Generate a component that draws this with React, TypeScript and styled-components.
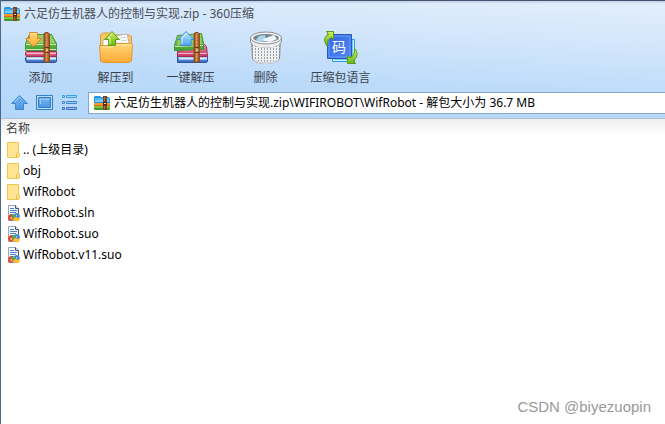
import React from "react";
import styled, { createGlobalStyle } from "styled-components";

const GlobalStyle = createGlobalStyle`
  *, *::before, *::after { box-sizing: border-box; }
  body {
    margin: 0;
    background: #fff;
    font-family: "Noto Sans", "Noto Sans CJK SC", sans-serif;
    font-size: 12px;
    line-height: 20px;
    color: #000;
  }
  svg { display: block; flex: none; }
`;

const Window = styled.main`
  position: relative;
  display: flex;
  flex-direction: column;
  min-height: 100vh;
  border-left: 1px solid #49698f;
  overflow: hidden;
`;

const Header = styled.header`
  border-top: 1px solid #42536f;
  border-bottom: 1px solid #b4bfcc;
  background:
    linear-gradient(#8fa0b866, #ffffff00 3px),
    linear-gradient(183deg, #e3effd 0%, #d3e6fb 30%, #bcdbfa 65%, #b3d6fa 100%);
`;

const TitleBar = styled.div`
  display: flex;
  align-items: center;
  gap: 4px;
  height: 26px;
  padding-left: 3px;
`;

const Title = styled.h1`
  margin: 0;
  font-size: 12px;
  font-weight: 400;
  color: #474c54;
  white-space: nowrap;
`;

const Toolbar = styled.nav`
  display: flex;
  padding: 3px 0 0 2px;
`;

const ToolButton = styled.button`
  display: flex;
  flex: none;
  flex-direction: column;
  align-items: center;
  gap: 2px;
  width: 75px;
  padding: 0;
  border: 0;
  background: none;
  font: inherit;
  color: #3c424c;
  white-space: nowrap;
`;

const AddressBar = styled.div`
  display: flex;
  align-items: center;
  padding: 4px 0 4px 10px;
`;

const NavButton = styled.button`
  width: 25px;
  padding: 0;
  border: 0;
  background: none;
`;

const AddressField = styled.label`
  display: flex;
  flex: 1;
  align-items: center;
  gap: 4px;
  height: 22px;
  margin-left: 2px;
  padding-left: 5px;
  border: 1px solid #86a6ca;
  border-right: 0;
  background: #fff;
`;

const AddressInput = styled.input`
  flex: 1;
  min-width: 0;
  padding: 0;
  border: 0;
  outline: 0;
  background: none;
  font: inherit;
  color: #000;
`;

const Content = styled.section`
  flex: 1;
  background: linear-gradient(#efefef, #fff 18px);
`;

const FileTable = styled.table`
  width: 100%;
  border-collapse: collapse;
`;

const ColumnHead = styled.th`
  height: 20px;
  padding: 0 5px;
  font-weight: 400;
  text-align: left;
  color: #3c3c3c;
`;

const FileCell = styled.td`
  height: 21px;
  padding: 0 5px;
`;

const FileEntry = styled.div`
  display: flex;
  align-items: center;
  gap: 2px;
`;

const Watermark = styled.div`
  position: absolute;
  right: 14px;
  bottom: 7px;
  font-family: "Liberation Sans", sans-serif;
  font-size: 15px;
  color: #999;
`;

const ArchiveIcon = () => (
  <svg width="16" height="16" viewBox="0 0 16 16" aria-hidden="true">
    <path d="M1 1h5l1 1h8l1 2v4H0V2z" fill="#2596e2" />
    <path d="M1 3h14v4H1z" fill="#54b9f0" />
    <path d="M1 5h14v2H1z" fill="#7bd0f8" />
    <path d="M0 8h16v3H0z" fill="#f99a2b" />
    <path d="M0 10h16v1H0z" fill="#e06c18" />
    <path d="M0 11h16v3l-1 1H1l-1-1z" fill="#7cc53e" />
    <path d="M0 13h16v1l-1 1H1l-1-1z" fill="#44982a" />
    <path d="M9 1h4v14H9z" fill="#7c4022" />
    <path d="M10 2h1v4h-1zM10 11h1v3h-1z" fill="#b46b3d" />
    <path d="M9 7h4v3H9z" fill="#4b2112" />
    <path d="M10 8h2v1h-2z" fill="#f5dfc8" />
  </svg>
);

const Gradients = () => (
  <svg width="0" height="0" aria-hidden="true">
    <defs>
      <linearGradient id="green" x2="0" y2="1"><stop stopColor="#9dd665" /><stop offset="1" stopColor="#3f9f32" /></linearGradient>
      <linearGradient id="red" x2="0" y2="1"><stop stopColor="#f08aa4" /><stop offset="1" stopColor="#c43562" /></linearGradient>
      <linearGradient id="blue" x2="0" y2="1"><stop stopColor="#8bb8f0" /><stop offset="1" stopColor="#2d5dbc" /></linearGradient>
      <linearGradient id="orange" x2="0" y2="1"><stop stopColor="#ffd876" /><stop offset="1" stopColor="#fca936" /></linearGradient>
      <linearGradient id="strap"><stop stopColor="#8b4a1c" /><stop offset=".5" stopColor="#d08446" /><stop offset="1" stopColor="#8b4a1c" /></linearGradient>
      <linearGradient id="sky" x2="0" y2="1"><stop stopColor="#c5ebff" /><stop offset="1" stopColor="#4ba4ef" /></linearGradient>
      <linearGradient id="lime" x2="0" y2="1"><stop stopColor="#d3f35a" /><stop offset="1" stopColor="#68b516" /></linearGradient>
      <linearGradient id="code" x2="1" y2="1"><stop stopColor="#3267df" /><stop offset="1" stopColor="#5288fa" /></linearGradient>
      <linearGradient id="nav" x2="0" y2="1"><stop stopColor="#78b8f5" /><stop offset="1" stopColor="#4a94e4" /></linearGradient>
      <pattern id="mesh" width="3" height="3" patternUnits="userSpaceOnUse">
        <rect width="3" height="3" fill="#f0f1f2" /><rect width="1" height="2" x="1" fill="#999da1" />
      </pattern>
    </defs>
  </svg>
);

const Strap = () => (
  <>
    <path d="M21 3.500 22.500 2.500h2.500l1.500 1.500v28H21z" fill="url(#strap)" stroke="#8b4d22" />
    <path d="M23.500 5v26" stroke="#e4a267" strokeDasharray="2 1" />
    <path d="M22 17.500h4M22 22.500h4" stroke="#6d3814" />
    <path d="M23 19h2v2h-2z" fill="#e9bf85" />
  </>
);

const AddIcon = () => (
  <svg width="36" height="36" viewBox="0 0 36 36" aria-hidden="true">
    <path d="M3.500 26.500h30v5l-1 1h-29l-1-2v-3z" fill="url(#blue)" stroke="#31579f" />
    <path d="M4 28.500h29" stroke="#e2efff" strokeWidth="2" />
    <path d="M3.500 21.500h30v5h-30l-1-2v-2z" fill="url(#red)" stroke="#a12b54" />
    <path d="M4 23.500h29" stroke="#f7bccb" />
    <path d="M6.500 4.500h22l5 9v7h-31v-7z" fill="url(#green)" stroke="#45943a" />
    <path d="M8 6h20l4 7H4z" fill="#94cf63" />
    <path d="M3 14.500h30M3 19.500h30" stroke="#c9e8aa" />
    <Strap />
    <path d="M6.500 2.500h8v6h4l-8 8-8-8h4z" fill="url(#orange)" stroke="#d98a2b" />
    <path d="M7.500 3.500h6" stroke="#fff0b1" />
  </svg>
);

const ExtractIcon = () => (
  <svg width="36" height="36" viewBox="0 0 36 36" aria-hidden="true">
    <path d="M2.500 31V5l2-2h7l2 2h18l2 2v24z" fill="#f9c95f" stroke="#cf9c42" />
    <path d="m5 10 6-4 6 11H5z" fill="#fafafa" stroke="#b9b9b9" />
    <path d="m17 6 12-2 3 13H19z" fill="#fff" stroke="#b3b3b3" />
    <path d="m22 8 6-1m-5 4 6-1" stroke="#c8cbcf" />
    <path d="M1.500 15.500h12l3-2h17l1 1-1 16-2 2h-27l-2-2z" fill="url(#orange)" stroke="#e2962d" />
    <path d="M3 17h11l3-2h16" fill="none" stroke="#ffe8a0" />
    <path d="m14 1.500 7.500 8h-4v6h-7v-6h-4z" fill="url(#lime)" stroke="#5ba021" />
    <path d="m14 4-4 4h2v6" fill="none" stroke="#ebfaa0" />
  </svg>
);

const QuickExtractIcon = () => (
  <svg width="36" height="36" viewBox="0 0 36 36" aria-hidden="true">
    <path d="M4.500 26.500h30v5l-1 1h-29z" fill="url(#blue)" stroke="#31579f" />
    <path d="M6 28.500h28" stroke="#dceaff" strokeWidth="2" />
    <path d="m4.500 21.500 27-7 2 2 1 10h-30z" fill="url(#red)" stroke="#a12b54" />
    <path d="M5 23.500h29" stroke="#f5b6c5" />
    <path d="m4.500 5.500 24-2 2 10v6l-29 1v-5z" fill="url(#green)" stroke="#45943a" />
    <path d="m6 7 21-2 2 9-25 1z" fill="#94cf63" />
    <path d="m2 16.500 28-1" stroke="#c9e8aa" />
    <Strap />
    <path d="m13 1.500 8 8h-3v6H8v-6H5z" fill="url(#sky)" stroke="#3b8dd4" />
    <path d="m13 4-4 4v6" fill="none" stroke="#eafaff" />
  </svg>
);

const DeleteIcon = () => (
  <svg width="36" height="36" viewBox="0 0 36 36" aria-hidden="true">
    <path d="m3.500 8 1 21c3 6 23 6 27 0l1-21z" fill="url(#mesh)" stroke="#85898d" />
    <path d="M5 28c4 5 22 5 26 0l-1 3c-6 4-18 4-24 0z" fill="#d9dadc" />
    <path d="M2.500 8v4c3 7 28 7 31 0V8z" fill="#eee" stroke="#8b9094" />
    <ellipse cx="18" cy="8" rx="15.500" ry="6" fill="#f5f5f5" stroke="#8b9094" />
    <ellipse cx="18" cy="8" rx="13" ry="4" fill="#78838c" />
    <path d="m8 10 3-4 6-1 1 6-6 1z" fill="#a8d9f1" />
    <path d="m15 9 11-4 3 4-7 3-6-1z" fill="#edf8fe" />
    <path d="M5 14c5 4 21 4 26 0" fill="none" stroke="#fff" />
  </svg>
);

const CodeGlyph = styled.text`
  font-family: "Noto Sans CJK SC", sans-serif;
  font-size: 14px;
  fill: #fff;
`;

const LanguageIcon = () => (
  <svg width="36" height="36" viewBox="0 0 36 36" aria-hidden="true">
    <path d="M9.500 9.500h22v22h-22z" fill="#d3efff" stroke="#2f99df" />
    <path d="M11 29h18V10" fill="none" stroke="#61c9f4" strokeWidth="2" />
    <path d="M4.500 4.500h24v24h-24z" fill="url(#code)" stroke="#2857bd" />
    <path d="M6 6h21v21H6z" fill="none" stroke="#6b99f6" />
    <CodeGlyph x="9" y="22">码</CodeGlyph>
    <path d="M3.500 15.500C0 10 2 6 5.500 4.500l-2-3h7v8l-2-2C5 9 4 12 4.500 15.500z" fill="url(#lime)" stroke="#579818" />
    <path d="M32.500 19.500c3 5 1 9-2 11l2 3h-8v-8l3 2c3-1 4-4 4-8z" fill="url(#lime)" stroke="#579818" />
  </svg>
);

const UpIcon = () => (
  <svg width="18" height="18" viewBox="0 0 18 18" aria-hidden="true">
    <path d="m8.500 1.500 8 8h-4v6h-8v-6h-4z" fill="url(#nav)" stroke="#3f88d0" />
    <path d="m8.500 3-5 5" stroke="#a7d5fb" />
  </svg>
);

const PreviewIcon = () => (
  <svg width="18" height="18" viewBox="0 0 18 18" aria-hidden="true">
    <path d="M.5 1.500h16v14H.5z" fill="#b9dcfb" stroke="#347fca" />
    <path d="M2.500 3.500h12v10h-12z" fill="url(#nav)" stroke="#347fca" />
    <path d="M4.500 5v5" stroke="#d7edff" strokeDasharray="1 1" />
    <path d="M6 5.500h7" stroke="#96c9f6" />
  </svg>
);

const ListIcon = () => (
  <svg width="18" height="18" viewBox="0 0 18 18" aria-hidden="true">
    <path d="M1.500 1.500h2v2h-2zM5.500 1.500h10v2h-10z" fill="#a2dcfb" stroke="#3b9ee5" />
    <path d="M1.500 7.500h2v2h-2zM5.500 7.500h10v2h-10z" fill="#a2cff7" stroke="#3f87d4" />
    <path d="M1.500 13.500h2v2h-2zM5.500 13.500h10v2h-10z" fill="#98bff0" stroke="#3971c2" />
  </svg>
);

const FolderIcon = () => (
  <svg width="15" height="18" viewBox="0 0 15 18" aria-hidden="true">
    <path d="M1.500 1.500h11v15h-11z" fill="#ffe591" stroke="#edc751" />
    <path d="M10.500 16.500v-4l1-1h1l1 1v3l-1 1z" fill="#ffe591" stroke="#e9bf48" />
  </svg>
);

const FileIcon = () => (
  <svg width="15" height="18" viewBox="0 0 15 18" aria-hidden="true">
    <path d="M2.500 1.500h7l3 3v12h-10z" fill="#f7fbff" stroke="#96a5b7" />
    <path d="M9.500 1.500v3h3v5" fill="#dce8f4" stroke="#43566c" />
    <path d="M4 4.500h4M4 6.500h7M4 8.500h6M4 10.500h3" stroke="#4d83c4" />
    <path d="M2 14c0-3 3-5 5-3l2 2-3 4c-2 0-4-1-4-3z" fill="#dd4d2b" />
    <path d="m7 11 3-2c3 0 5 3 3 5l-3 1z" fill="#3c82dc" />
    <path d="m6 16 3-3 5 1c0 2-2 4-4 3l-2-1z" fill="#fbc42c" />
    <path d="m6 11 2-1 2 2-3 3z" fill="#53b04b" />
    <path d="m4 14 2-1v2zM10 11h1v2z" fill="#fff" />
  </svg>
);

const tools = [
  { label: "添加", Icon: AddIcon },
  { label: "解压到", Icon: ExtractIcon },
  { label: "一键解压", Icon: QuickExtractIcon },
  { label: "删除", Icon: DeleteIcon },
  { label: "压缩包语言", Icon: LanguageIcon },
];

const navigation = [
  { label: "向上", Icon: UpIcon },
  { label: "预览", Icon: PreviewIcon },
  { label: "列表", Icon: ListIcon },
];

const files = [
  { name: ".. (上级目录)", folder: true },
  { name: "obj", folder: true },
  { name: "WifRobot", folder: true },
  { name: "WifRobot.sln", folder: false },
  { name: "WifRobot.suo", folder: false },
  { name: "WifRobot.v11.suo", folder: false },
];

export default function App() {
  return (
    <Window>
      <GlobalStyle />
      <Header>
        <TitleBar>
          <ArchiveIcon />
          <Title>六足仿生机器人的控制与实现.zip - 360压缩</Title>
        </TitleBar>
        <Toolbar>
          {tools.map(({ label, Icon }) => (
            <ToolButton key={label} type="button"><Icon />{label}</ToolButton>
          ))}
        </Toolbar>
        <AddressBar>
          {navigation.map(({ label, Icon }) => (
            <NavButton key={label} type="button" aria-label={label}><Icon /></NavButton>
          ))}
          <AddressField>
            <ArchiveIcon />
            <AddressInput aria-label="路径" defaultValue={"六足仿生机器人的控制与实现.zip\\WIFIROBOT\\WifRobot - 解包大小为 36.7 MB"} />
          </AddressField>
        </AddressBar>
      </Header>
      <Content>
        <FileTable>
          <thead><tr><ColumnHead scope="col">名称</ColumnHead></tr></thead>
          <tbody>
            {files.map(({ name, folder }) => (
              <tr key={name}>
                <FileCell><FileEntry>{folder ? <FolderIcon /> : <FileIcon />}{name}</FileEntry></FileCell>
              </tr>
            ))}
          </tbody>
        </FileTable>
      </Content>
      <Watermark>CSDN @biyezuopin</Watermark>
      <Gradients />
    </Window>
  );
}
